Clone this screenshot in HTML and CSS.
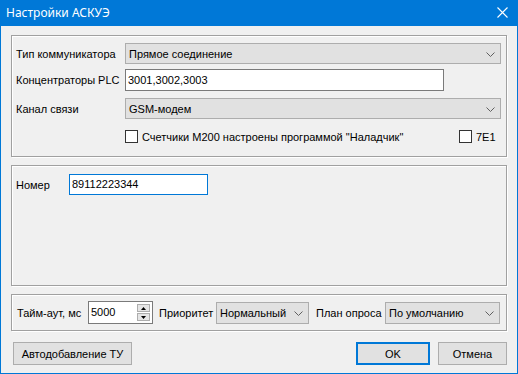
FILE: index.html
```html
<!DOCTYPE html>
<html lang="ru">
<head>
<meta charset="UTF-8">
<title>Настройки АСКУЭ</title>
<link rel="stylesheet" href="styles.css">
</head>
<body>

<div class="window">
    <div class="titlebar">
        <span class="title">Настройки АСКУЭ</span>
        <svg class="close" width="11" height="11" viewBox="0 0 11 11">
            <path d="M0.5 0.5 L10.5 10.5 M10.5 0.5 L0.5 10.5" stroke="#fff" stroke-width="1.1"/>
        </svg>
    </div>

    <div class="client">
        <div class="group group-main">
            <div class="row row-first">
                <span class="label">Тип коммуникатора</span>
                <div class="combo combo-wide">
                    <span>Прямое соединение</span>
                    <svg class="arrow" width="9" height="5" viewBox="0 0 9 5"><path d="M0.5 0.5 L4.5 4.5 L8.5 0.5" fill="none" stroke="#606060"/></svg>
                </div>
            </div>
            <div class="row row-edit">
                <span class="label">Концентраторы PLC</span>
                <div class="edit edit-plc">3001,3002,3003</div>
            </div>
            <div class="row row-channel">
                <span class="label">Канал связи</span>
                <div class="combo combo-wide">
                    <span>GSM-модем</span>
                    <svg class="arrow" width="9" height="5" viewBox="0 0 9 5"><path d="M0.5 0.5 L4.5 4.5 L8.5 0.5" fill="none" stroke="#606060"/></svg>
                </div>
            </div>
            <div class="row row-checks">
                <label class="check check-main"><span class="box"></span>Счетчики М200 настроены программой "Наладчик"</label>
                <label class="check"><span class="box"></span>7E1</label>
            </div>
        </div>

        <div class="group group-number">
            <div class="row">
                <span class="label label-short">Номер</span>
                <div class="edit edit-focus">89112223344</div>
            </div>
        </div>

        <div class="group group-opts">
            <span class="label label-timeout">Тайм-аут, мс</span>
            <div class="edit spin">
                <span>5000</span>
                <div class="spin-btns">
                    <div class="spin-btn"><svg width="5" height="3" viewBox="0 0 5 3"><path d="M0 3 L2.5 0 L5 3 Z" fill="#000"/></svg></div>
                    <div class="spin-btn"><svg width="5" height="3" viewBox="0 0 5 3"><path d="M0 0 L2.5 3 L5 0 Z" fill="#000"/></svg></div>
                </div>
            </div>
            <span class="label label-prio">Приоритет</span>
            <div class="combo combo-prio">
                <span>Нормальный</span>
                <svg class="arrow" width="9" height="5" viewBox="0 0 9 5"><path d="M0.5 0.5 L4.5 4.5 L8.5 0.5" fill="none" stroke="#606060"/></svg>
            </div>
            <span class="label label-plan">План опроса</span>
            <div class="combo combo-plan">
                <span>По умолчанию</span>
                <svg class="arrow" width="9" height="5" viewBox="0 0 9 5"><path d="M0.5 0.5 L4.5 4.5 L8.5 0.5" fill="none" stroke="#606060"/></svg>
            </div>
        </div>

        <div class="buttons">
            <button class="btn btn-auto">Автодобавление ТУ</button>
            <div class="spacer"></div>
            <button class="btn btn-ok">OK</button>
            <button class="btn btn-cancel">Отмена</button>
        </div>
    </div>
</div>

</body>
</html>
```

FILE: styles.css
```css
body {
    margin: 0;
    font-family: 'Liberation Sans', Arial, sans-serif;
    font-size: 11px;
    color: #000;
    background: #f0f0f0;
}

.window {
    width: 516px;
    height: 373px;
    border: 1px solid #0078d7;
    border-top: none;
    background: #f0f0f0;
    display: flex;
    flex-direction: column;
}

.titlebar {
    height: 26px;
    margin: 0 -1px;
    background: #0078d7;
    display: flex;
    align-items: center;
    padding: 0 10px 0 6px;
    color: #fff;
    flex-shrink: 0;
}

.title {
    font-family: 'Noto Sans', sans-serif;
    font-size: 12px;
    flex: 1;
    margin-top: -2px;
}

.close {
    margin-top: -2px;
}

.client {
    display: flex;
    flex-direction: column;
    padding: 9px 10px 0 10px;
}

.group {
    border: 1px solid #a0a0a0;
    box-shadow: inset 1px 1px #fff, 1px 1px #fff;
    box-sizing: border-box;
    width: 496px;
}

.group-main {
    height: 122px;
    padding: 7px 5px 0 4px;
}

.group-number {
    height: 121px;
    margin-top: 8px;
    padding: 8px 5px 0 4px;
}

.group-opts {
    height: 37px;
    margin-top: 8px;
    padding: 0 5px 0 5px;
    display: flex;
    align-items: center;
}

.row {
    display: flex;
    align-items: center;
}

.row-edit {
    margin-top: 5px;
}

.row-channel {
    margin-top: 7px;
}

.row-checks {
    margin-top: 11px;
    padding-left: 109px;
}

.label {
    width: 109px;
    flex-shrink: 0;
    white-space: nowrap;
}

.label-short {
    width: 53px;
}

.label-timeout {
    width: 71px;
}

.label-prio {
    width: 57px;
}

.label-plan {
    width: 69px;
}

.combo {
    height: 21px;
    box-sizing: border-box;
    background: #e1e1e1;
    border: 1px solid #adadad;
    display: flex;
    align-items: center;
    padding: 0 5px 0 3px;
}

.combo span {
    flex: 1;
    white-space: nowrap;
}

.combo-wide {
    width: 376px;
}

.arrow {
    margin-top: 1px;
}

.edit {
    height: 22px;
    box-sizing: border-box;
    background: #fff;
    border: 1px solid #7a7a7a;
    display: flex;
    align-items: center;
    padding: 0 2px 1px 2px;
}

.edit-plc {
    width: 319px;
}

.edit-focus {
    width: 139px;
    height: 21px;
    border-color: #0078d7;
}

.check {
    display: flex;
    align-items: center;
    white-space: nowrap;
}

.check-main {
    width: 334px;
}

.box {
    width: 13px;
    height: 13px;
    box-sizing: border-box;
    border: 1px solid #333;
    background: #fff;
    margin-right: 4px;
}

.spin {
    width: 65px;
    height: 23px;
    padding: 0 2px 0 2px;
    margin-right: 6px;
}

.spin span {
    flex: 1;
    margin-bottom: 2px;
}

.spin-btns {
    display: flex;
    flex-direction: column;
    gap: 1px;
}

.spin-btn {
    width: 13px;
    height: 8px;
    border: 1px solid #adadad;
    background: #e5e5e5;
    box-sizing: border-box;
    display: flex;
    align-items: center;
    justify-content: center;
}

.combo-prio {
    width: 93px;
    height: 22px;
    margin-right: 7px;
}

.combo-plan {
    width: 115px;
    height: 22px;
}

.buttons {
    display: flex;
    margin-top: 11px;
    padding-left: 2px;
}

.spacer {
    flex: 1;
}

.btn {
    height: 23px;
    font-family: inherit;
    font-size: 11px;
    background: #e1e1e1;
    border: 1px solid #adadad;
    padding: 0;
    color: #000;
}

.btn-auto {
    width: 119px;
}

.btn-ok {
    width: 74px;
    border: 2px solid #0078d7;
    margin-right: 8px;
}

.btn-cancel {
    width: 69px;
}
```
